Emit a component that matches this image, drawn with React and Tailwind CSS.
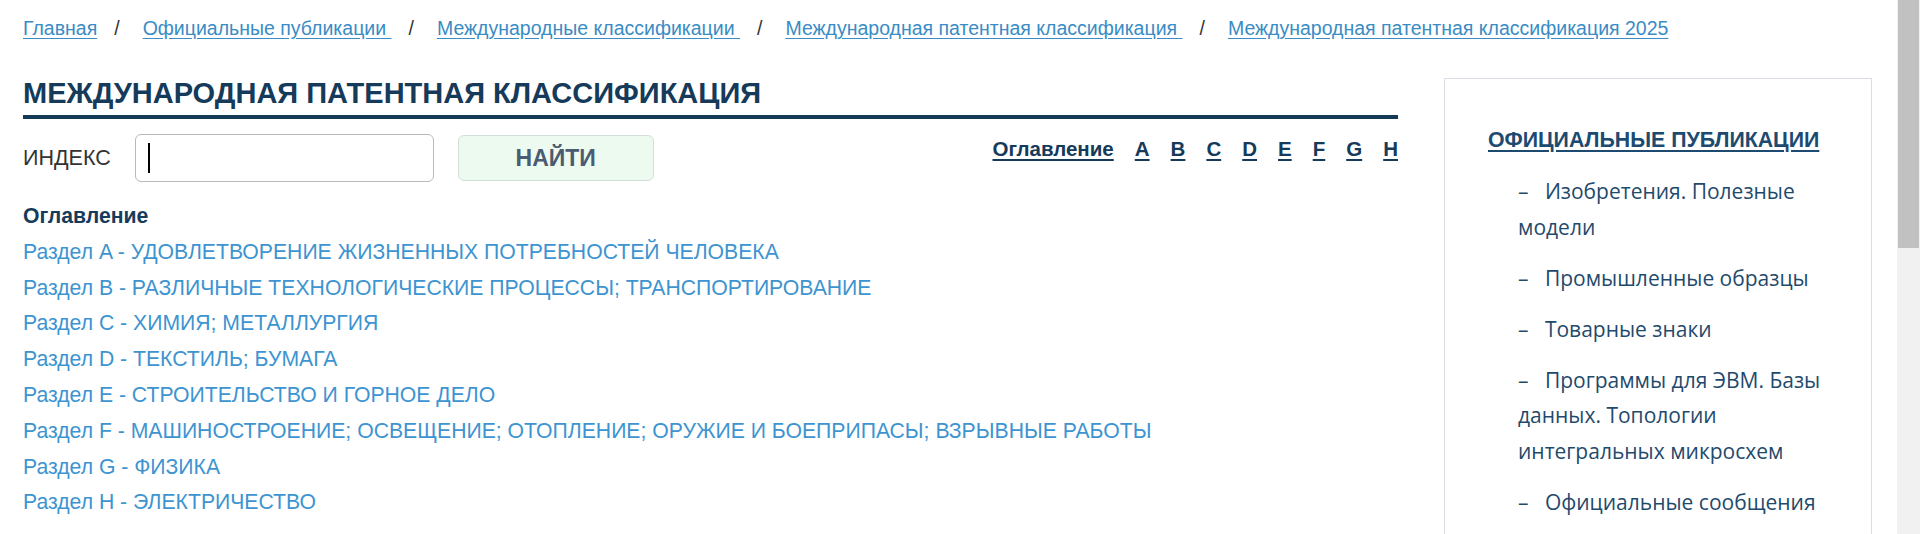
import React from "react";

const crumbs = [
  "Главная",
  "Официальные публикации ",
  "Международные классификации ",
  "Международная патентная классификация ",
  "Международная патентная классификация 2025",
];

const letters = ["A", "B", "C", "D", "E", "F", "G", "H"];

const sections = [
  "Раздел A - УДОВЛЕТВОРЕНИЕ ЖИЗНЕННЫХ ПОТРЕБНОСТЕЙ ЧЕЛОВЕКА",
  "Раздел B - РАЗЛИЧНЫЕ ТЕХНОЛОГИЧЕСКИЕ ПРОЦЕССЫ; ТРАНСПОРТИРОВАНИЕ",
  "Раздел C - ХИМИЯ; МЕТАЛЛУРГИЯ",
  "Раздел D - ТЕКСТИЛЬ; БУМАГА",
  "Раздел E - СТРОИТЕЛЬСТВО И ГОРНОЕ ДЕЛО",
  "Раздел F - МАШИНОСТРОЕНИЕ; ОСВЕЩЕНИЕ; ОТОПЛЕНИЕ; ОРУЖИЕ И БОЕПРИПАСЫ; ВЗРЫВНЫЕ РАБОТЫ",
  "Раздел G - ФИЗИКА",
  "Раздел H - ЭЛЕКТРИЧЕСТВО",
];

const publications = [
  "Изобретения. Полезные модели",
  "Промышленные образцы",
  "Товарные знаки",
  "Программы для ЭВМ. Базы данных. Топологии интегральных микросхем",
  "Официальные сообщения",
];

const Breadcrumbs = () => (
  <nav className="flex items-center text-[19.5px] leading-[24px] text-[#333]">
    {crumbs.map((c, i) => (
      <React.Fragment key={i}>
        {i > 0 && <span className="mr-[23px] ml-[17px]">/</span>}
        <a href="#" className="whitespace-pre text-[#3a8cc4] underline underline-offset-[3px]">
          {c}
        </a>
      </React.Fragment>
    ))}
  </nav>
);

const Sidebar = () => (
  <aside className="mt-[2px] ml-[46px] w-[428px] shrink-0 border border-[#d9dee4] pt-[43px] pr-[35px] pl-[43px] pb-[60px]">
    <a
      href="#"
      className="block text-[21.3px] leading-[36px] font-bold text-[#1c4a70] underline underline-offset-[3px]"
    >
      ОФИЦИАЛЬНЫЕ ПУБЛИКАЦИИ
    </a>

    <ul className="mt-[16px] ml-[30px] flex flex-col gap-[15.3px] font-['Open_Sans',sans-serif] text-[21px] leading-[35.7px] text-[#1f4a6c]">
      {publications.map((p) => (
        <li key={p}>
          <a href="#" className="block">
            –{"\u00a0\u00a0 "}{p}
          </a>
        </li>
      ))}
    </ul>
  </aside>
);

export default function App() {
  return (
    <div className="flex h-[534px] overflow-hidden bg-white font-['Liberation_Sans',Arial,sans-serif]">
      <div className="flex-1 pt-[16px] pl-[23px]">
        <Breadcrumbs />

        <div className="mt-[36px] flex items-start">
          {/* Main column */}
          <main className="w-[1375px] shrink-0">
            <h1 className="border-b-4 border-[#153a56] pb-[5px] text-[29px] leading-[34px] font-bold text-[#163a59]">
              МЕЖДУНАРОДНАЯ ПАТЕНТНАЯ КЛАССИФИКАЦИЯ
            </h1>

            <div className="mt-[15px] flex items-start justify-between">
              <div className="flex items-center gap-[24px]">
                <label className="text-[21.5px] text-[#333]">ИНДЕКС</label>
                <div className="relative">
                  <input
                    type="text"
                    className="h-[48px] w-[299px] rounded-[6px] border border-[#b9b9b9] bg-white px-3 outline-none"
                  />
                  <span className="absolute top-[9px] left-[13px] h-[30px] w-[2px] bg-black" />
                </div>
                <button className="h-[46px] w-[196px] rounded-[6px] border border-[#d3e0d7] bg-[#edfaf0] font-['Liberation_Sans_Narrow',sans-serif] text-[23px] font-bold text-[#4b5b70]">
                  НАЙТИ
                </button>
              </div>

              <div className="flex gap-[21px] text-[20.5px] leading-[30px] font-bold text-[#163a59]">
                <a href="#" className="underline underline-offset-[3px]">Оглавление</a>
                {letters.map((l) => (
                  <a key={l} href="#" className="underline underline-offset-[3px]">
                    {l}
                  </a>
                ))}
              </div>
            </div>

            <div className="mt-[16px] text-[21.2px] leading-[35.8px]">
              <h2 className="font-bold text-[#173b5a]">Оглавление</h2>
              <ul>
                {sections.map((s) => (
                  <li key={s}>
                    <a href="#" className="text-[#3d94d0]">{s}</a>
                  </li>
                ))}
              </ul>
            </div>
          </main>

          <Sidebar />
        </div>
      </div>

      {/* Scrollbar */}
      <div className="w-[23px] shrink-0 bg-[#f1f1f1] px-[1px]">
        <div className="h-[248px] bg-[#c1c1c1]" />
      </div>
    </div>
  );
}
